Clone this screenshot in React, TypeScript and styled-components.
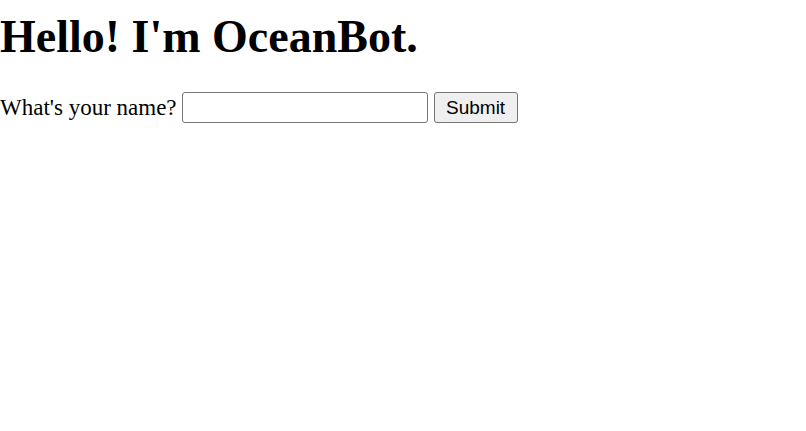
import { createGlobalStyle, styled } from "styled-components";

const Global = createGlobalStyle`
  body {
    margin: 0;
    background: #ffffff;
    color: #000000;
    font-family: "Liberation Serif", "Times New Roman", serif;
  }
`;

const Page = styled.div`
  display: flex;
  flex-direction: column;
`;

const Title = styled.h1`
  font-size: 46px;
  font-weight: 700;
  margin: 10px 0 0 0;
  line-height: normal;
`;

const Form = styled.form`
  display: flex;
  align-items: center;
  margin-top: 29px;
  font-size: 23px;
`;

const Label = styled.label`
  margin-right: 5px;
`;

const NameInput = styled.input`
  width: 246px;
  height: 31px;
  box-sizing: border-box;
  border: 1px solid #767676;
  border-radius: 3px;
  padding: 2px 4px;
  font-size: 20px;
  margin: 0 6px 0 0;
`;

const SubmitBtn = styled.button`
  height: 31px;
  width: 84px;
  box-sizing: border-box;
  background: #efefef;
  border: 1px solid #767676;
  border-radius: 3px;
  font-family: "Liberation Sans", Arial, sans-serif;
  font-size: 19px;
  color: #000;
  padding: 0;
`;

export default function App() {
  return (
    <Page>
      <Global />
      <Title>Hello! I'm OceanBot.</Title>
      <Form onSubmit={(e) => e.preventDefault()}>
        <Label htmlFor="name">What's your name?</Label>
        <NameInput id="name" type="text" />
        <SubmitBtn type="submit">Submit</SubmitBtn>
      </Form>
    </Page>
  );
}
